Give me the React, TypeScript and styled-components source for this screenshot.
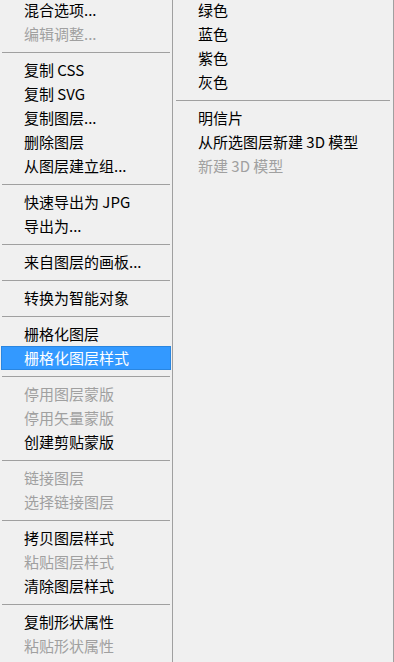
import { createGlobalStyle, styled } from 'styled-components';

type Item = { label: string; disabled?: boolean; active?: boolean };
type Group = Item[];

const leftGroups: Group[] = [
  [{ label: '混合选项...' }, { label: '编辑调整...', disabled: true }],
  [
    { label: '复制 CSS' },
    { label: '复制 SVG' },
    { label: '复制图层...' },
    { label: '删除图层' },
    { label: '从图层建立组...' },
  ],
  [{ label: '快速导出为 JPG' }, { label: '导出为...' }],
  [{ label: '来自图层的画板...' }],
  [{ label: '转换为智能对象' }],
  [{ label: '栅格化图层' }, { label: '栅格化图层样式', active: true }],
  [
    { label: '停用图层蒙版', disabled: true },
    { label: '停用矢量蒙版', disabled: true },
    { label: '创建剪贴蒙版' },
  ],
  [
    { label: '链接图层', disabled: true },
    { label: '选择链接图层', disabled: true },
  ],
  [
    { label: '拷贝图层样式' },
    { label: '粘贴图层样式', disabled: true },
    { label: '清除图层样式' },
  ],
  [{ label: '复制形状属性' }, { label: '粘贴形状属性', disabled: true }],
];

const rightGroups: Group[] = [
  [{ label: '绿色' }, { label: '蓝色' }, { label: '紫色' }, { label: '灰色' }],
  [
    { label: '明信片' },
    { label: '从所选图层新建 3D 模型' },
    { label: '新建 3D 模型', disabled: true },
  ],
];

const GlobalStyle = createGlobalStyle`
  html, body {
    margin: 0;
    padding: 0;
    height: 662px;
    overflow: hidden;
    background: #f0f0f0;
  }
  body {
    font-family: "Noto Sans CJK SC", "Microsoft YaHei", sans-serif;
    font-size: 15px;
    color: #000;
  }
`;

const Menu = styled.div`
  display: flex;
  height: 662px;
  background: #f0f0f0;
  border-right: 1px solid #a0a0a0;
  box-sizing: border-box;
  overflow: hidden;
`;

const Column = styled.div<{ $width?: number; $divider?: boolean }>`
  display: flex;
  flex-direction: column;
  flex: ${(p) => (p.$width ? `0 0 ${p.$width}px` : '1 1 auto')};
  margin-top: -2px;
  border-right: ${(p) => (p.$divider ? '1px solid #a0a0a0' : 'none')};
  box-sizing: border-box;
`;

const Row = styled.div<{ $disabled?: boolean; $active?: boolean; $indent: number }>`
  height: 24px;
  line-height: 21px;
  margin: 0 1px;
  padding-left: ${(p) => p.$indent - 2}px;
  white-space: nowrap;
  box-sizing: border-box;
  color: ${(p) => (p.$active ? '#fff' : p.$disabled ? '#a0a0a0' : '#000')};
  background: ${(p) => (p.$active ? '#3399ff' : 'transparent')};
  border: 1px solid ${(p) => (p.$active ? '#2a86e0' : 'transparent')};
`;

const Separator = styled.div<{ $inset: number }>`
  height: 12px;
  display: flex;
  align-items: center;
  padding: 0 ${(p) => p.$inset}px;

  &::after {
    content: '';
    flex: 1;
    height: 1px;
    background: #a0a0a0;
  }
`;

const MenuColumn = ({
  groups,
  indent,
  inset,
  width,
  divider,
}: {
  groups: Group[];
  indent: number;
  inset: number;
  width?: number;
  divider?: boolean;
}) => (
  <Column $width={width} $divider={divider}>
    {groups.map((g, gi) => (
      <div key={gi}>
        {gi > 0 && <Separator $inset={inset} />}
        {g.map((item, i) => (
          <Row key={i} $indent={indent} $disabled={item.disabled} $active={item.active}>
            {item.label}
          </Row>
        ))}
      </div>
    ))}
  </Column>
);

export default function App() {
  return (
    <>
      <GlobalStyle />
      <Menu>
        <MenuColumn groups={leftGroups} indent={24} inset={2} width={173} divider />
        <MenuColumn groups={rightGroups} indent={25} inset={3} />
      </Menu>
    </>
  );
}
